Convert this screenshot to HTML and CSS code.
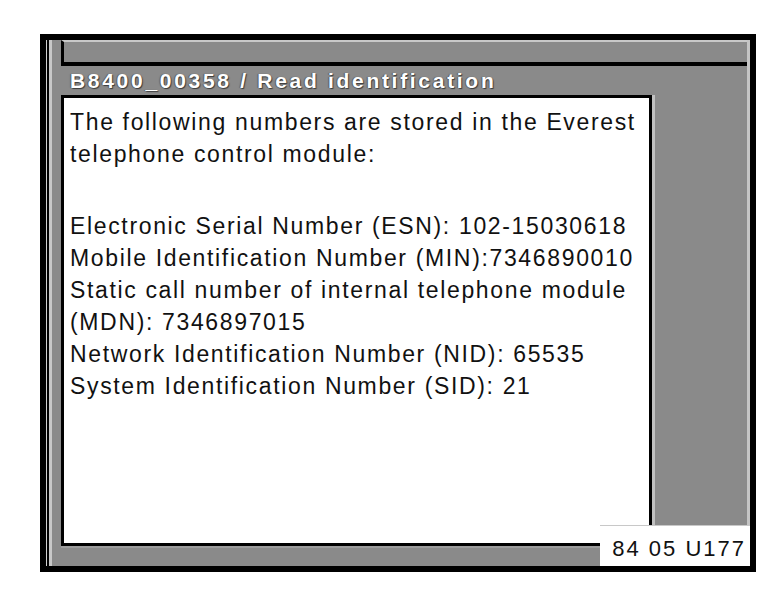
FILE: index.html
```html
<!DOCTYPE html>
<html>
<head>
<meta charset="utf-8">
<link rel="stylesheet" href="styles.css">
</head>
<body>
<div class="frame">
  <div class="rails"></div>
  <div class="main">
    <div class="topbar"></div>
    <div class="title">B8400_00358 / Read identification</div>
    <div class="bodyrow">
      <div class="content">
        <div class="line">The following numbers are stored in the Everest</div>
        <div class="line">telephone control module:</div>
        <div class="spacer"></div>
        <div class="line">Electronic Serial Number (ESN): 102-15030618</div>
        <div class="line">Mobile Identification Number (MIN):7346890010</div>
        <div class="line">Static call number of internal telephone module</div>
        <div class="line">(MDN): 7346897015</div>
        <div class="line">Network Identification Number (NID): 65535</div>
        <div class="line">System Identification Number (SID): 21</div>
      </div>
      <div class="side"></div>
    </div>
    <div class="bottombar"></div>
  </div>
  <div class="label">84 05 U177</div>
</div>
</body>
</html>
```

FILE: styles.css
```css
html, body {
  margin: 0;
  padding: 0;
  background: #fff;
}
body {
  padding: 34px 0 0 40px;
}
.frame {
  position: relative;
  box-sizing: border-box;
  width: 716px;
  height: 538px;
  border: 6px solid #000;
  display: flex;
  font-family: "Liberation Sans", Arial, sans-serif;
}
.rails {
  width: 6px;
  flex: none;
  background: linear-gradient(to right, #d0d0d0 0 1px, #000 1px 3px, #c8c8c8 3px 6px);
}
.main {
  flex: 1;
  display: flex;
  flex-direction: column;
  background: #8a8a8a;
  border-right: 3px solid #c4c4c4;
}
.topbar {
  box-sizing: border-box;
  height: 26px;
  margin-left: 9px;
  border-top: 2px solid #c8c8c8;
  border-left: 3px solid #000;
  border-bottom: 4px solid #000;
  flex: none;
}
.title {
  height: 29px;
  line-height: 29px;
  padding-left: 18px;
  color: #fff;
  font-weight: bold;
  font-size: 21px;
  letter-spacing: 2.7px;
  text-shadow: 1px 1px 1px #3a3a3a, -1px 0 1px #5a5a5a;
  flex: none;
  white-space: nowrap;
}
.bodyrow {
  height: 451px;
  display: flex;
  flex: none;
}
.content {
  box-sizing: border-box;
  margin-left: 9px;
  width: 591px;
  height: 451px;
  border: 3px solid #000;
  background: #fff;
  padding: 8px 0 0 6px;
  color: #111;
  font-size: 23px;
  letter-spacing: 1.65px;
  line-height: 32px;
  white-space: nowrap;
}
.spacer {
  height: 40px;
}
.side {
  flex: 1;
  border-left: 3px solid #c0c0c0;
}
.bottombar {
  height: 20px;
  flex: none;
  margin-left: 9px;
  border-top: 2px solid #9c9c9c;
  box-sizing: border-box;
}
.label {
  position: absolute;
  right: 0;
  bottom: 0;
  box-sizing: border-box;
  width: 150px;
  height: 41px;
  background: #fff;
  border-top: 1px solid #c8c8c8;
  color: #111;
  font-size: 22px;
  letter-spacing: 2px;
  text-align: right;
  padding: 10px 4px 0 0;
  line-height: 26px;
}
```
